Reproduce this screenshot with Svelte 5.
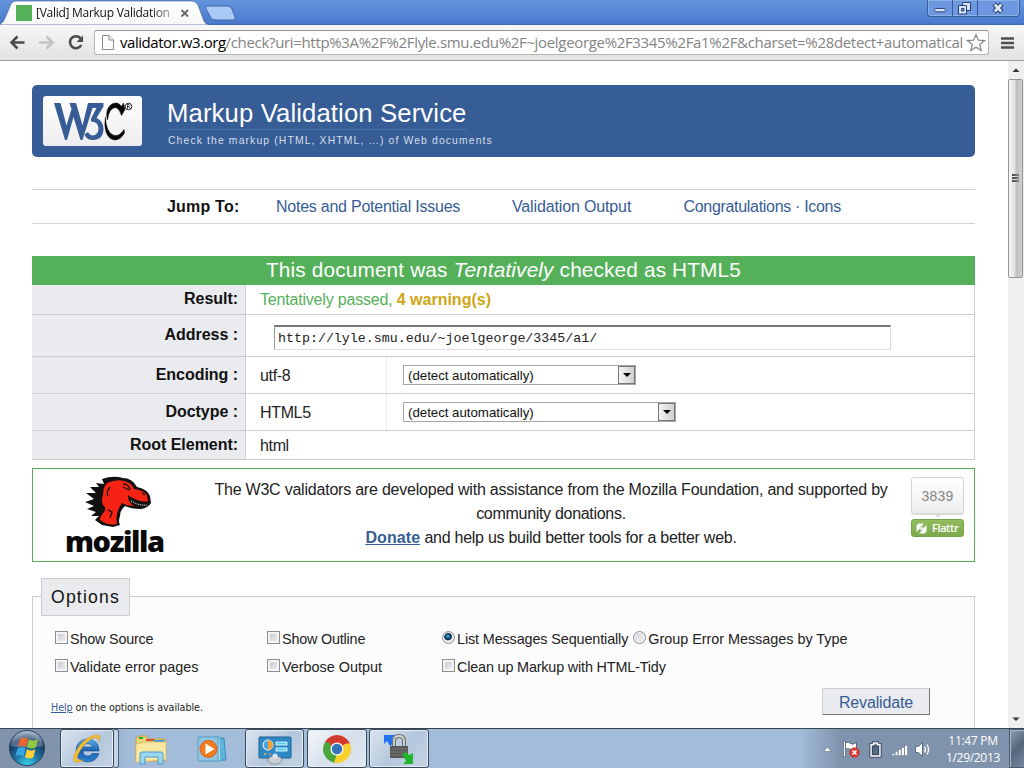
<script>
  const bars = [2, 4, 6, 8, 10];
</script>

<div class="screen">
  <header class="tabstrip">
    <svg class="tabs" width="250" height="25" viewBox="0 0 250 25">
      <defs>
        <linearGradient id="tabFill" x1="0" y1="0" x2="0" y2="1"><stop offset="0" stop-color="#fff"/><stop offset="1" stop-color="#f7f7f7"/></linearGradient>
      </defs>
      <path d="M0 25V24Q3 23 5 18L11 4Q12.500 1 16 1H192Q196 1 198 5L204 21Q205.500 24.500 209 24.500V25Z" fill="url(#tabFill)" stroke="#41609a" stroke-width=".7"/>
      <path d="M207 6H228Q231 6 232 9L235 17Q236 20 232 20H216Q212 20 210.500 17L206 9Q205 6 207 6Z" fill="#a9caf5" stroke="#4068ad"/>
      <rect x="16" y="5" width="16" height="16" fill="#55b05a"/>
      <path d="M181.500 10l6.500 6.500m0-6.500l-6.500 6.500" stroke="#666" stroke-width="1.800"/>
    </svg>
    <span class="tabtitle">[Valid] Markup Validation</span>
    <div class="winbtns">
      <div class="wb"><svg width="24" height="16" viewBox="0 0 25 16"><rect x="7" y="8.500" width="11" height="3.500" rx="1" fill="#d5e4fa" stroke="#2b4271"/></svg></div>
      <div class="wb"><svg width="24" height="16" viewBox="0 0 24 16"><path d="M9.500 2.500h8v8h-8z" fill="#d5e4fa" stroke="#2b4271"/><path d="M5.500 5.500h8v8.500h-8z" fill="#d5e4fa" stroke="#2b4271"/><path d="M8.500 8.500h2.500v2.500h-2.500z" fill="#7ea3de" stroke="#2b4271"/></svg></div>
      <div class="wb close"><svg width="41" height="16" viewBox="0 0 41 16"><path d="M16.200 4l7.600 8m0-8l-7.600 8" stroke="#2b4271" stroke-width="4.800"/><path d="M16.700 4.500l6.600 7m0-7l-6.600 7" stroke="#dce8fa" stroke-width="2.600"/></svg></div>
    </div>
  </header>

  <div class="toolbar">
    <svg width="94" height="35" viewBox="0 0 94 35">
      <path d="M24.500 17.500H11M17.500 11.500l-6 6 6 6" fill="none" stroke="#4c4c4c" stroke-width="2.600"/>
      <path d="M39 17.500h13.500M46.500 11.500l6 6-6 6" fill="none" stroke="#c3c3c3" stroke-width="2.600"/>
      <path d="M80.500 13.200A6 6 0 1 0 81.300 20" fill="none" stroke="#4c4c4c" stroke-width="2.600"/>
      <path d="M83 10.500v6.500h-6.500z" fill="#4c4c4c"/>
    </svg>
    <div class="omnibox">
      <svg width="25" height="23" viewBox="0 0 25 23"><path d="M7.500 4.500h6.500l4.500 4.500v9.500h-11z" fill="#fdfdfd" stroke="#8a8a8a"/><path d="M14 4.500v4.500h4.500" fill="#eee" stroke="#8a8a8a"/></svg>
      <span class="url"><b>validator.w3.org</b>/check?uri=http%3A%2F%2Flyle.smu.edu%2F~joelgeorge%2F3345%2Fa1%2F&amp;charset=%28detect+automatical</span>
      <svg class="star" width="20" height="20" viewBox="0 0 20 20"><path d="M10 1.500l2.300 5.700 6.200.4-4.800 3.900 1.600 6-5.300-3.300-5.300 3.300 1.600-6L1.500 7.600l6.200-.4z" fill="#fff" stroke="#888" stroke-width="1.200"/></svg>
    </div>
    <svg class="menu" width="13" height="14" viewBox="0 0 13 14"><path d="M0 2.500h13M0 7h13M0 11.500h13" stroke="#505050" stroke-width="2.600"/></svg>
  </div>

  <div class="view">
    <main>
      <div class="banner">
        <div class="logo">
          <svg width="99" height="50" viewBox="0 0 99 50">
            <path d="M11 7H17.500L23.500 29.500L28.500 13L26.500 7H33L39.500 29.500L45 7H60.500V10.500L53.500 22Q60.500 25 60.500 33Q60 44 50 44Q43.500 44 41.500 38.500L45 36Q47 39.500 50 39.500Q55.500 39 55.500 32Q55 25.500 48 25.500V22.500L53.500 12H49.500L39.500 44H37.500L30.500 21L24 44H22Z" fill="#365d95"/>
            <path d="M80.500 7L82 13.500L78.500 19.500Q76.500 12.500 72.500 11.500Q66 12 64.500 24Q63 20 64 15Q66.500 7 73 7Q76.500 7 78.500 10.500ZM62.500 21Q63 36 70 39Q76 41.500 81 33.500L81.500 37Q78 43.500 72.500 44Q66 44 63 36Q61 29 62.500 21Z" fill="#050505" stroke="#050505" stroke-width=".5"/>
            <circle cx="85.500" cy="10.500" r="3.300" fill="none" stroke="#111" stroke-width=".9"/>
            <path d="M84.500 12.500v-4h1.300q1.200 1-.1 2.100H84.500m1.300 0l1 1.900" fill="none" stroke="#111" stroke-width=".8"/>
          </svg>
        </div>
        <div class="titles">
          <h1>Markup Validation Service</h1>
          <p>Check the markup (HTML, XHTML, …) of Web documents</p>
        </div>
      </div>

      <nav>
        <strong>Jump To:</strong>
        <a class="n1" href="#notes">Notes and Potential Issues</a>
        <a class="n2" href="#output">Validation Output</a>
        <a class="n3" href="#icons">Congratulations · Icons</a>
      </nav>

      <h2><span>This document was <i>Tentatively</i> checked as HTML5</span></h2>
      <div class="table">
        <div class="row r1"><div class="th">Result:</div><div class="td"><span class="pass">Tentatively passed, <b>4 warning(s)</b></span></div></div>
        <div class="row r2"><div class="th">Address :</div><div class="td"><div class="field">http://lyle.smu.edu/~joelgeorge/3345/a1/</div></div></div>
        <div class="row r3"><div class="th">Encoding :</div><div class="td half low">utf-8</div><div class="select enc"><span>(detect automatically)</span><i></i></div></div>
        <div class="row r3"><div class="th">Doctype :</div><div class="td half low">HTML5</div><div class="select doc"><span>(detect automatically)</span><i></i></div></div>
        <div class="row r4"><div class="th">Root Element:</div><div class="td low">html</div></div>
      </div>

      <section class="donate">
        <div class="moz">
          <svg width="70" height="52" viewBox="0 0 70 52">
            <path d="M17 3Q28-1 38 2Q47 2 52 11Q62 13 65 20L66 27Q63 32 56 33Q46 33 40 30Q35 34 35 40Q33 45 35 49L28 51L17 49L10 44L14 40L6 40L11 36L2 33L9 30L0 26L9 23L1 17L11 17L5 11L14 11L11 7L19 8Z" fill="#111"/>
            <path d="M22 7Q31 3 39 5Q46 6 49 13Q58 14 62 19L63 25Q60 27 52 24Q45 21 43 19Q43 28 50 30Q41 30 37 27Q33 33 32 38Q31 44 32 48Q23 50 15 44Q14 42 19 36Q22 32 18 29Q16 25 18 19Q18 11 22 7Z" fill="#f52313"/>
            <path d="M38 8q6 0 7 6M38 11l6 3M25 11q-4 5-2 9M23 34l4 2-2 6M57 17l3 2" fill="none" stroke="#111" stroke-width="1.300"/>
            <path d="M46 25q8 5 16 4" fill="none" stroke="#ddd" stroke-width="1.200" stroke-dasharray="1 1"/>
          </svg>
          <span>mozilla</span>
        </div>
        <div class="msg">
          <p><span class="m1">The W3C validators are developed with assistance from the Mozilla Foundation, and supported by</span></p>
          <p><span class="m2">community donations.</span></p>
          <p><span class="m3"><a href="#donate">Donate</a> and help us build better tools for a better web.</span></p>
        </div>
        <div class="flattr">
          <div class="count">3839</div>
          <div class="fbtn"><svg width="11" height="11" viewBox="0 0 11 11"><path d="M2.500.5H8L4.500 4V8L10.500 2V8.500L8.500 10.500H3L6.500 7V3L.5 9V2.500Z" fill="#fff"/></svg><span>Flattr</span></div>
        </div>
      </section>

      <section class="options">
        <div class="legend"><span>Options</span></div>
        <div class="opts">
          <div class="opt tight"><i class="cb"></i><span>Show Source</span></div>
          <div class="opt tight"><i class="cb"></i><span>Show Outline</span></div>
          <div class="opt tight"><i class="rd on"></i><span class="lm">List Messages Sequentially</span><i class="rd second"></i><span class="gm">Group Error Messages by Type</span></div>
          <div class="opt"><i class="cb"></i><span>Validate error pages</span></div>
          <div class="opt"><i class="cb"></i><span>Verbose Output</span></div>
          <div class="opt tidy"><i class="cb"></i><span>Clean up Markup with HTML-Tidy</span></div>
        </div>
        <div class="foot">
          <p><a href="#help">Help</a> on the options is available.</p>
          <div class="reval">Revalidate</div>
        </div>
      </section>
    </main>
    <aside class="scroll">
      <svg width="16" height="18" viewBox="0 0 16 18"><path d="M4.500 11L8 7.500l3.500 3.500z" fill="#333"/></svg>
      <div class="thumb"><i></i><i></i><i></i></div>
      <svg class="down" width="16" height="18" viewBox="0 0 16 18"><path d="M4.500 7.500L8 11l3.500-3.500z" fill="#333"/></svg>
    </aside>
  </div>

  <footer>
    <div class="start">
      <svg width="38" height="38" viewBox="0 0 38 38">
        <defs><radialGradient id="orb" cx=".5" cy="1" r="1"><stop offset="0" stop-color="#39dcf0"/><stop offset=".4" stop-color="#1c6f9f"/><stop offset=".75" stop-color="#16395e"/><stop offset="1" stop-color="#9cb4ca"/></radialGradient></defs>
        <circle cx="19" cy="19" r="17.500" fill="url(#orb)" stroke="#263f5a"/>
        <path d="M3 17A16 15 0 0 1 35 17Q19 20 3 17Z" fill="#fff" opacity=".25"/>
        <path d="M12 10Q16 7 20 10L18 18Q14 15 10 18Z" fill="#f0642c"/>
        <path d="M21 10.500Q26 13 30 10L28 18Q23 21 19 18Z" fill="#91c843"/>
        <path d="M9.500 19.500Q14 17 17.500 19.500L15.500 27.500Q12 25 7.500 27Z" fill="#38a5e5"/>
        <path d="M19 20Q23 23 27.500 20L25.500 28Q21 31 17 28Z" fill="#fed139"/>
      </svg>
    </div>
    <div class="tb ie">
      <svg width="34" height="34" viewBox="0 0 34 34"><defs><linearGradient id="ieb" x1="0" y1="0" x2="0" y2="1"><stop offset="0" stop-color="#5db4e8"/><stop offset=".5" stop-color="#1b62b0"/><stop offset="1" stop-color="#2b80cd"/></linearGradient></defs>
        <path fill-rule="evenodd" d="M29 19H13Q13 23.500 17.500 24Q21 24 22 21.500H29Q26 30 17.500 30Q6 29 6 18.500Q7 7.500 17.500 7Q29 8 29 19ZM13 15H22.500Q21.500 11.500 17.500 11.500Q14 11.500 13 15Z" fill="url(#ieb)" stroke="#174f92" stroke-width=".6"/>
        <path d="M29 9Q32 2 25 3Q17 5 10 13Q2 24 4 29Q7 32 13 28Q6 29 7 25Q11 14 21 7Q27 3 29 9Z" fill="#f3bf35" stroke="#d79c1d" stroke-width=".6"/></svg>
    </div>
    <div class="stack"></div>
    <div class="plain exp">
      <svg width="34" height="32" viewBox="0 0 34 32"><path d="M2 4L5 2H12L14 5H31V27H2Z" fill="#eed275" stroke="#c49d3f"/><path d="M5 3h4v2H5z" fill="#25a443"/><path d="M12 5h8v2h-8z" fill="#d94f39"/><path d="M20 6h10v2H20z" fill="#3a9be0"/><path d="M2 10L12 8H32V26L2 28Z" fill="#f9e8a2" stroke="#d4b55e" stroke-width=".7"/><path d="M6 30V20Q6 18 8 18H27Q29 18 29 20V30H24V23H11V30Z" fill="#9bd6ef" stroke="#4b9ac5"/></svg>
    </div>
    <div class="plain wmp">
      <svg width="32" height="30" viewBox="0 0 32 30"><path d="M8 5l19-1 2 22-20 1z" fill="#5fb4e0" stroke="#398db8"/><path d="M5 4l18-1 1 24-19-1z" fill="#a4dcf2" stroke="#5ca6ca"/><path d="M1 3h20v24H1z" fill="#8fc5e2" stroke="#5d9ec5"/><circle cx="11.500" cy="15" r="8.500" fill="#f27b1e" stroke="#d95f14"/><path d="M8.500 9.500l9 5.500-9 5.500z" fill="#fff"/></svg>
    </div>
    <div class="tb cp">
      <svg width="34" height="32" viewBox="0 0 34 32"><rect x="1" y="4" width="32" height="21" rx="1" fill="#2d8ac7" stroke="#225f92"/><circle cx="10" cy="12" r="5" fill="#4ca3d8" stroke="#fff"/><path d="M10 12V7A5 5 0 0 1 10 17Z" fill="#f4a13a"/><path d="M18 9h11v3H18zM18 15h11v3H18z" fill="#54d0ef" stroke="#fff" stroke-width=".8"/><circle cx="7" cy="21" r="1" fill="#f2b143"/><circle cx="12" cy="21" r="1" fill="#f2843a"/><ellipse cx="17" cy="27" rx="7" ry="4" fill="#ccd1d5" stroke="#737b81" stroke-width=".7"/><circle cx="17" cy="23" r="2.500" fill="#dfe3e6"/></svg>
    </div>
    <div class="tb chrome">
      <svg width="30" height="30" viewBox="0 0 30 30"><path d="M15 15L2.900 8A14 14 0 0 1 27.100 8Z" fill="#d33a2c"/><path d="M15 15L27.100 8A14 14 0 0 1 15 29Z" fill="#fbd02c"/><path d="M15 15V29A14 14 0 0 1 2.900 8Z" fill="#4aa53c"/><path d="M15 8H27.100L27.700 9.500H15Z" fill="#d33a2c"/><path d="M21 18.500L15 29L12 28.600L15 20Z" fill="#fbd02c"/><path d="M9 18.500L2.900 8L8 9Z" fill="#4aa53c"/><circle cx="15" cy="15" r="6.600" fill="#f4f4f4"/><circle cx="15" cy="15" r="5.200" fill="#3474bb"/></svg>
    </div>
    <div class="tb lock">
      <svg width="32" height="34" viewBox="0 0 32 34"><path d="M1 3h11l-3 3 2 5-4 3-3-5-3 3z" fill="#2372ed"/><path d="M11 15V9Q11 4 16 4T21 9V15" fill="none" stroke="#6b6b6b" stroke-width="4"/><path d="M11 15V9Q11 4 16 4T21 9V15" fill="none" stroke="#d4d4d4" stroke-width="1.800"/><rect x="7" y="14" width="18" height="12" rx="1" fill="#595757"/><path d="M8 17h16M8 20h16M8 23h16" stroke="#858282" stroke-width=".8"/><path d="M19 22l4-2 3 3 4-2v11H20l3-3z" fill="#21b52b"/></svg>
    </div>
    <div class="tray">
      <svg width="124" height="24" viewBox="0 0 124 24">
        <path d="M4.500 14.500L8.500 10l4 4.500z" fill="#fff" stroke="#56687c" stroke-width=".6"/>
        <path d="M25.500 4v16" stroke="#44576d" stroke-width="3"/><path d="M25.500 4.500v15" stroke="#fff" stroke-width="1.500"/><path d="M26.500 5.500q3-1 5 1t6-1v7q-3 2-6 0t-5 0z" fill="#fff" stroke="#44576d" stroke-width=".8"/>
        <circle cx="35.500" cy="15.500" r="4.800" fill="#df3a31" stroke="#b8211b" stroke-width=".6"/><path d="M33.500 13.500l4 4m0-4l-4 4" stroke="#fff" stroke-width="1.600"/>
        <path d="M54.500 6h4v1.500h2.500v11.500h-9V7.500h2.500z" fill="#586b80" stroke="#24374e" stroke-width="3"/><path d="M54.500 6h4v1.500h2.500v11.500h-9V7.500h2.500z" fill="#66788d" stroke="#fff" stroke-width="1.400"/><path d="M53.500 9.500h6v8h-6z" fill="#586b80" stroke="#24374e" stroke-width=".7"/>
        {#each bars as h, i}<rect x={73 + i * 3.200} y={18.500 - h} width="2.600" height={h} fill="#fff" stroke="#3c5066" stroke-width=".3"/>{/each}
        <path d="M96.500 9.500h3l4-4v14l-4-4h-3z" fill="#fff" stroke="#44576d" stroke-width=".8"/><path d="M105.500 9.500q2 3 0 6M108 7.500q3 5 0 10" fill="none" stroke="#fff" stroke-width="1.200"/>
      </svg>
      <div class="clock"><span class="time">11:47 PM</span><span class="date">1/29/2013</span></div>
      <div class="peek"></div>
    </div>
  </footer>
</div>

<style>
  :global(body) { margin: 0; overflow: hidden; }
  .screen { width: 1024px; height: 768px; display: flex; flex-direction: column; overflow: hidden; background: #fff; font-family: "Liberation Sans", Arial, sans-serif; color: #222; white-space: nowrap; }
  .screen :is(div, span, svg, i, p, a) { box-sizing: border-box; }
  svg { display: block; flex: none; }
  a { color: #365d95; }
  h1, h2, p { margin: 0; font-weight: normal; }

  .tabstrip { height: 25px; flex: none; display: flex; background: linear-gradient(#6494dc, #4c7ace 92%, #3f62a8); position: relative; }
  .tabtitle { position: absolute; left: 36px; top: 5px; width: 135px; overflow: hidden; font: 12px/16px "Open Sans", sans-serif; letter-spacing: -0.27px; color: #111; -webkit-mask-image: linear-gradient(90deg, #000 115px, rgba(0,0,0,.35)); mask-image: linear-gradient(90deg, #000 115px, rgba(0,0,0,.35)); }
  .winbtns { margin-left: auto; margin-right: 4px; height: 17px; display: flex; border: 1px solid #395c9c; border-top: 0; border-radius: 0 0 4px 4px; background: #6d98df; box-shadow: inset 0 0 0 1px #8cb0e8; }
  .wb { border-right: 1px solid #395c9c; }
  .wb.close { border: 0; width: 41px; }

  .toolbar { height: 36px; flex: none; display: flex; background: linear-gradient(#f7f7f7, #e2e2e2); border-bottom: 1px solid #a0a0a0; }
  .omnibox { width: 895px; flex: none; height: 25px; margin-top: 5px; display: flex; border: 1px solid #b4b4b4; border-top-color: #979797; border-radius: 3px; background: #fff; }
  .url { flex: 1; min-width: 0; font: 15px/23px "Open Sans", sans-serif; letter-spacing: -0.33px; color: #848484; }
  .url b { font-weight: normal; color: #000; letter-spacing: -0.45px; }
  .star { margin: 2px 2px 0 0; }
  .menu { margin: 11px 0 0 12px; }

  .view { height: 667px; flex: none; display: flex; }
  main { flex: 1; padding: 24px 33px 0 32px; overflow: hidden; }
  .banner { height: 72px; display: flex; background: #365d95; border-radius: 5px; }
  .logo { width: 99px; height: 50px; margin: 11px 25px 0 11px; border-radius: 3px; background: linear-gradient(#fff, #ededef); }
  .titles { padding-top: 12px; color: #fff; }
  h1 { font-size: 25.7px; line-height: 32px; height: 32px; width: 299px; letter-spacing: .12px; border-bottom: 1px solid #4f73a5; }
  .titles p { margin-left: 1px; font-size: 10.4px; line-height: 14px; margin-top: 4px; letter-spacing: 1.12px; color: #d5deeb; }

  nav { height: 35px; margin-top: 32px; border-top: 1px solid #d2d2d2; border-bottom: 1px solid #d2d2d2; box-sizing: border-box; display: grid; grid-template-columns: 109px 236px 171.5px 1fr; padding-left: 135px; line-height: 33px; font-size: 16px; }
  nav strong { color: #111; letter-spacing: .2px; }
  nav a { text-decoration: none; }
  .n1 { letter-spacing: -.24px; }
  .n2 { letter-spacing: -.14px; }
  .n3 { letter-spacing: -.31px; }

  h2 { margin-top: 32px; height: 29px; background: #55b05a; color: #fff; font-size: 20.8px; line-height: 28px; text-align: center; letter-spacing: .14px; }
  .row { display: flex; border-bottom: 1px solid #ccc; border-right: 1px solid #ccc; }
  .r1 { height: 30px; line-height: 29px; }
  .r1 .th { line-height: 27px; }
  .r2 { height: 42px; line-height: 39px; }
  .r3 { height: 37px; line-height: 36px; }
  .r4 { height: 29px; line-height: 28px; }
  .th { width: 214px; padding-right: 7px; background: #eaebee; border-right: 1px solid #ccc; text-align: right; font-weight: bold; color: #111; font-size: 16px; letter-spacing: -.04px; }
  .td { padding-left: 14px; font-size: 16px; }
  .low { padding-top: 1px; letter-spacing: -.35px; }
  .half { width: 141px; border-right: 1px solid #eaebee; }
  .pass { color: #55b05a; letter-spacing: -.19px; }
  .pass b { color: #cda616; letter-spacing: 0; }
  .field { width: 617px; height: 25px; margin: 10px 0 0 14px; padding-left: 3px; border: 1px solid #ddd; border-top: 2px solid #767676; border-left: 1px solid #999; font: 13.3px/23px "Liberation Mono", monospace; color: #222; }
  .select { height: 20px; margin: 8px 0 0 16px; display: flex; justify-content: space-between; border: 1px solid #a3a5ab; font-size: 13.3px; line-height: 19px; padding-left: 4px; color: #111; }
  .select span { letter-spacing: -.03px; }
  .enc { width: 233px; }
  .doc { width: 273px; }
  .select i { width: 17px; border: 1px solid #777; background: linear-gradient(90deg, #f4f4f4, #cfcfcf); display: flex; align-items: center; justify-content: center; }
  .select i::before { content: ""; border: 4px solid transparent; border-top-color: #000; border-bottom: 0; }

  .donate { height: 94px; margin-top: 8px; border: 1px solid #55b05a; box-sizing: border-box; display: flex; }
  .moz { width: 163px; padding: 7px 0 0 52px; }
  .moz span { display: block; width: 102px; margin: -5px 0 0 -20px; font: 800 29px/36px "Open Sans", sans-serif; letter-spacing: -1.4px; color: #0a0a0a; }
  .msg { width: 710px; padding-top: 9px; font-size: 16px; line-height: 24px; text-align: center; }
  .m1 { letter-spacing: -.218px; }
  .m2 { letter-spacing: -.3px; }
  .m3 { letter-spacing: -.26px; }
  .msg a { font-weight: bold; letter-spacing: .1px; }
  .flattr { width: 53px; margin: 8px 0 0 5px; }
  .count { height: 37px; border: 1px solid #d6d6d6; border-radius: 3px; background: linear-gradient(#fff, #eee); text-align: center; font: 14px/36px "Liberation Sans", sans-serif; letter-spacing: .2px; color: #858585; display: flex; flex-direction: column; align-items: center; box-shadow: 0 1px 1px #ddd; }
  .count::after { content: ""; flex: none; border: 4px solid transparent; border-top-color: #ddd; border-bottom: 0; }
  .fbtn { height: 18px; margin-top: 5px; padding-left: 4px; display: flex; align-items: center; gap: 5px; border: 1px solid #77a04c; border-radius: 3px; background: linear-gradient(#91bd5f, #7ca94c); color: #fff; font: 600 11px/16px "Open Sans", sans-serif; letter-spacing: -.4px; }

  .options { height: 160px; margin-top: 34px; border: 1px solid #ccc; background: #fcfcfc; padding-left: 8px; }
  .legend { width: 89px; height: 38px; margin-top: -19px; border: 1px solid #ccc; background: #eaebee; font-size: 17.6px; line-height: 36px; padding-left: 9px; letter-spacing: 1.2px; color: #111; }
  .opts { display: grid; grid-template-columns: 212px 175px 1fr; grid-auto-rows: 28px; padding: 9px 0 0 14px; font-size: 14.4px; line-height: 28px; }
  .opt { display: flex; }
  .tight { letter-spacing: -.2px; }
  .tidy { letter-spacing: -.17px; }
  .lm { letter-spacing: -.12px; }
  .gm { letter-spacing: -.02px; }
  .cb { flex: none; width: 13px; height: 13px; margin: 6px 2px 0 0; border: 1px solid #8e8f8f; background: linear-gradient(135deg, #bfc3ca, #f6f6f6); box-shadow: inset 0 0 0 2px #f4f4f4; }
  .rd { flex: none; width: 13px; height: 13px; margin: 6px 2px 0 0; border: 1px solid #8e8f8f; border-radius: 50%; background: linear-gradient(135deg, #cfd2d7, #f6f6f6); box-shadow: inset 0 0 0 1px #f4f4f4; }
  .rd.on { background: radial-gradient(circle at 45% 40%, #4fc0e8 0, #14547e 2px, #0d2c48 3.500px, #dfe3e6 4.300px); }
  .rd.second { margin-left: 5px; }
  .foot { display: flex; justify-content: space-between; padding: 7px 44px 0 10px; }
  .foot p { font: 9.600px/14px "DejaVu Sans", sans-serif; padding-top: 13px; letter-spacing: -0.07px; }
  .reval { width: 108px; height: 27px; border: 1px solid #ccc; border-right-color: #777; border-bottom: 1px solid #777; background: #eaebee; text-align: center; font-size: 16px; line-height: 27px; letter-spacing: -.15px; color: #365d95; }

  .scroll { width: 16px; display: flex; flex-direction: column; background: #efefef; }
  .thumb { width: 15px; height: 199px; border: 1px solid #959595; border-radius: 2px; background: linear-gradient(90deg, #f6f6f6, #e4e4e4 40%, #bebebe 60%, #d2d2d2); display: flex; flex-direction: column; align-items: center; justify-content: center; gap: 1px; padding-bottom: 2px; }
  .thumb i { width: 7px; height: 2px; background: linear-gradient(90deg, #444, #888); }
  .down { margin-top: auto; }

  footer { height: 40px; flex: none; display: flex; border-top: 1px solid #38444f; box-sizing: border-box; background: linear-gradient(90deg, #8193aa 0 55px, #a2bcd9 130px 800px, #8093ac 840px); }
  .start { width: 60px; padding-left: 8px; }
  .tb { height: 39px; border: 1px solid #39475a; border-radius: 3px; background: linear-gradient(135deg, #dbe4ef, #b4c7dc 55%, #c4d3e3); box-shadow: inset 0 0 0 1px #e4edf6; display: flex; align-items: center; justify-content: center; }
  .ie { width: 54px; }
  .stack { width: 5px; height: 39px; border: 1px solid #4d5d72; border-left: 0; background: #c5d5e6; border-radius: 0 3px 3px 0; }
  .exp { margin-left: 15px; padding-top: 5px; width: 63px; }
  .wmp { padding-top: 5px; width: 48px; }
  .cp { width: 59px; }
  .chrome { width: 60px; margin-left: 3px; background: linear-gradient(135deg, #f4f7fa, #d4dfea 55%, #e1e9f1); }
  .lock { width: 60px; margin-left: 2px; }
  .tray { margin-left: auto; display: flex; }
  .tray > svg { margin-top: 8px; }
  .clock { width: 66px; padding: 3px 6px 0 0; display: flex; flex-direction: column; align-items: center; font: 12px/17px "Open Sans", sans-serif; letter-spacing: -0.3px; color: #fff; }
  .peek { width: 15px; height: 39px; border: 1px solid #4a5b70; border-right: 0; background: linear-gradient(135deg, #8fa0b4, #56677c 50%, #7587a0); box-shadow: inset 1px 1px 0 #a9b8ca; }
</style>
